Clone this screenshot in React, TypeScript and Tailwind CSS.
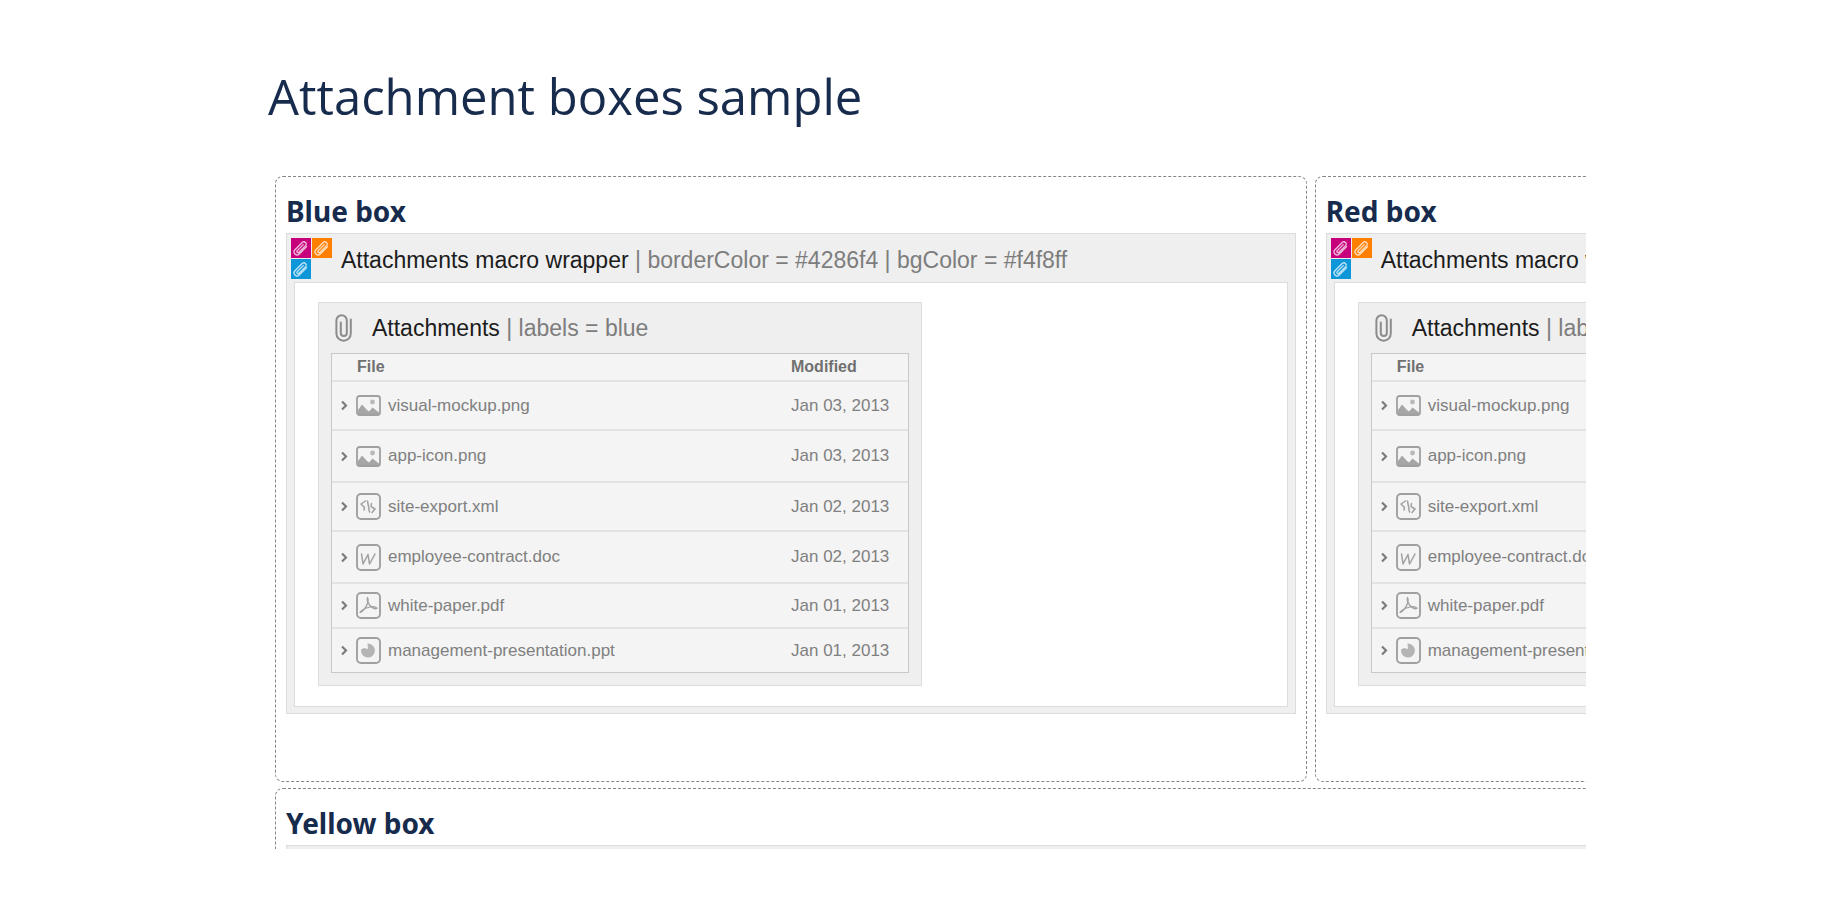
import React from 'react';

type FileKind = 'image' | 'code' | 'doc' | 'pdf' | 'ppt';

interface AttachmentFile {
  name: string;
  modified: string;
  kind: FileKind;
  rowClass: string;
}

interface BoxProps {
  title: string;
  label: string;
  borderColor: string;
  bgColor: string;
  className?: string;
}

const FILES: AttachmentFile[] = [
  { name: 'visual-mockup.png', modified: 'Jan 03, 2013', kind: 'image', rowClass: 'h-[49px]' },
  { name: 'app-icon.png', modified: 'Jan 03, 2013', kind: 'image', rowClass: 'h-[52px]' },
  { name: 'site-export.xml', modified: 'Jan 02, 2013', kind: 'code', rowClass: 'h-[49px]' },
  { name: 'employee-contract.doc', modified: 'Jan 02, 2013', kind: 'doc', rowClass: 'h-[52px]' },
  { name: 'white-paper.pdf', modified: 'Jan 01, 2013', kind: 'pdf', rowClass: 'h-[45px]' },
  { name: 'management-presentation.ppt', modified: 'Jan 01, 2013', kind: 'ppt', rowClass: 'h-[43px]' },
];

const ClipTile: React.FC<{ className: string }> = ({ className }) => (
  <span className={`flex h-5 w-5 items-center justify-center ${className}`}>
    <svg viewBox="0 0 20 20" className="h-5 w-5" fill="none" stroke="#fff" strokeWidth="1.3" strokeLinecap="round" strokeOpacity="0.75">
      <g transform="rotate(45 10 10)">
        <path d="M13 5v10.500a3 3 0 0 1-6 0V4.700a2.400 2.400 0 0 1 4.600 0V14.500a1.200 1.200 0 0 1-2.400 0V6" />
      </g>
    </svg>
  </span>
);

const WrapperLogo = () => (
  <div className="grid grid-cols-2 gap-px">
    <ClipTile className="bg-[#c7007b]" />
    <ClipTile className="bg-[#ff8000]" />
    <ClipTile className="bg-[#0d96d8]" />
  </div>
);

const PaperClip = () => (
  <svg viewBox="0 0 17 28" className="h-7 w-[17px]" fill="none" stroke="#8c8c8c" strokeWidth="2" strokeLinecap="round">
    <path d="M15.800 5.500V19.500a7.200 7.200 0 0 1-14.400 0V6.500a5.200 5.200 0 0 1 10.400 0V19a3 3 0 0 1-6 0V8.500" />
  </svg>
);

const FileIcon: React.FC<{ kind: FileKind }> = ({ kind }) => {
  if (kind === 'image') {
    return (
      <svg viewBox="0 0 25 21" className="h-[21px] w-[25px]">
        <rect x="1" y="1" width="23" height="19" rx="2.500" fill="#f4f4f4" stroke="#a0a0a0" strokeWidth="1.800" />
        <circle cx="16.500" cy="7" r="2.400" fill="#b8b8b8" />
        <path d="M2 19v-4l4-5.500 5 5.500 2 1.500 3.500-4 6.500 5v1.500z" fill="#a6a6a6" />
      </svg>
    );
  }
  return (
    <svg viewBox="0 0 25 27" className="h-[27px] w-[25px]" fill="none" stroke="#a0a0a0" strokeWidth="1.500" strokeLinecap="round" strokeLinejoin="round">
      <rect x="1" y="1" width="23" height="25" rx="4" fill="#f4f4f4" strokeWidth="1.900" />
      {kind === 'code' && <path d="M9.500 8l-4.500 3 3.500 3.500-.5 2.500M11.500 8l2 11M15.500 10.500l-.5 3 4 2.500-3 3.500" />}
      {kind === 'doc' && <path d="M5.500 10l1.500 10 5-9.500 1.500 9.500 5.500-10" />}
      {kind === 'pdf' && (
        <path d="M11.500 5.500c-1 2.500 1 7 4 9.500 2 1.500 4.500 2 5.500 1.200-1.500-1.700-5.500-1.700-9-.7-3.500 1-7 3-8 5 2.500-.5 6-5 7.500-9 .8-2.500 1-4.500 0-6z" strokeWidth="1.300" />
      )}
      {kind === 'ppt' && <path d="M12 12l-.5-5.500a7 7 0 1 1-6.500 6l3-1.500z" fill="#b4b4b4" stroke="none" />}
    </svg>
  );
};

const Chevron = () => (
  <svg viewBox="0 0 7 11" className="h-[11px] w-[7px]" fill="none" stroke="#7c7c7c" strokeWidth="2.200">
    <path d="M1 1.500l4 4-4 4" />
  </svg>
);

const AttachmentsTable = () => (
  <table className="w-full table-fixed border-separate border-spacing-0 border border-[#c9c9c9] bg-[#f4f4f4] text-left text-[17px] leading-5 text-[#808080]">
    <colgroup>
      <col />
      <col className="w-[117px]" />
    </colgroup>
    <thead>
      <tr className="h-7 text-[16px] text-[#707070]">
        <th className="border-b-2 border-[#e2e2e2] p-0 pl-[25px] font-bold">File</th>
        <th className="border-b-2 border-[#e2e2e2] p-0 font-bold">Modified</th>
      </tr>
    </thead>
    <tbody>
      {FILES.map((file, i) => {
        const line = i < FILES.length - 1 ? 'border-b-2 border-[#e2e2e2]' : '';
        return (
          <tr key={file.name} className={file.rowClass}>
            <td className={`p-0 pl-[9px] ${line}`}>
              <div className="flex items-center">
                <button type="button" aria-label={`Expand ${file.name}`} className="mr-2">
                  <Chevron />
                </button>
                <FileIcon kind={file.kind} />
                <span className="ml-[7px]">{file.name}</span>
              </div>
            </td>
            <td className={`p-0 whitespace-nowrap ${line}`}>{file.modified}</td>
          </tr>
        );
      })}
    </tbody>
  </table>
);

const AttachmentBox: React.FC<BoxProps> = ({ title, label, borderColor, bgColor, className = '' }) => (
  <section className={`rounded-lg border border-dashed border-[#858585] px-[10px] pt-3 pb-[67px] ${className}`}>
    <h2 className="font-['Noto_Sans','Open_Sans',sans-serif] text-[28px] leading-[44px] font-bold text-[#172b4d]">{title}</h2>
    <div className="border border-[#dcdcdc] bg-[#efefef] pb-[6px] font-['Liberation_Sans',Arial,sans-serif]">
      <div className="flex h-12 items-center pl-1">
        <WrapperLogo />
        <p className="ml-[9px] pt-1 text-[23px] whitespace-nowrap text-[#7d7d7d]">
          <span className="text-[#1c1c1c]">Attachments macro wrapper</span> | borderColor = {borderColor} | bgColor = {bgColor}
        </p>
      </div>
      <div className="mx-[7px] border border-[#dcdcdc] bg-white px-[23px] pt-[19px] pb-5">
        <div className="w-[604px] border border-[#dcdcdc] bg-[#efefef] px-3 pb-3">
          <div className="flex h-[50px] items-center pl-1">
            <PaperClip />
            <p className="ml-5 text-[23px] text-[#7d7d7d]">
              <span className="text-[#1c1c1c]">Attachments</span> | labels = {label}
            </p>
          </div>
          <AttachmentsTable />
        </div>
      </div>
    </div>
  </section>
);

const App: React.FC = () => {
  return (
    <div className="flex h-screen flex-col bg-white pr-[254px] pb-[51px] pl-[268px]">
      <h1 className="pt-[60px] pb-[44px] font-['Open_Sans','Noto_Sans',sans-serif] text-[49px] leading-[72px] font-normal text-[#172b4d]">
        Attachment boxes sample
      </h1>
      {/* boxes run past the right edge and are cut there */}
      <main className="ml-[7px] min-h-0 flex-1 overflow-hidden">
        <div className="grid w-[158%] grid-cols-2 gap-x-2 gap-y-[6px]">
          <AttachmentBox title="Blue box" label="blue" borderColor="#4286f4" bgColor="#f4f8ff" />
          <AttachmentBox title="Red box" label="red" borderColor="#f44242" bgColor="#fff4f4" />
          <AttachmentBox title="Yellow box" label="yellow" borderColor="#f4d142" bgColor="#fffdf4" className="col-span-2" />
        </div>
      </main>
    </div>
  );
};

export default App;
